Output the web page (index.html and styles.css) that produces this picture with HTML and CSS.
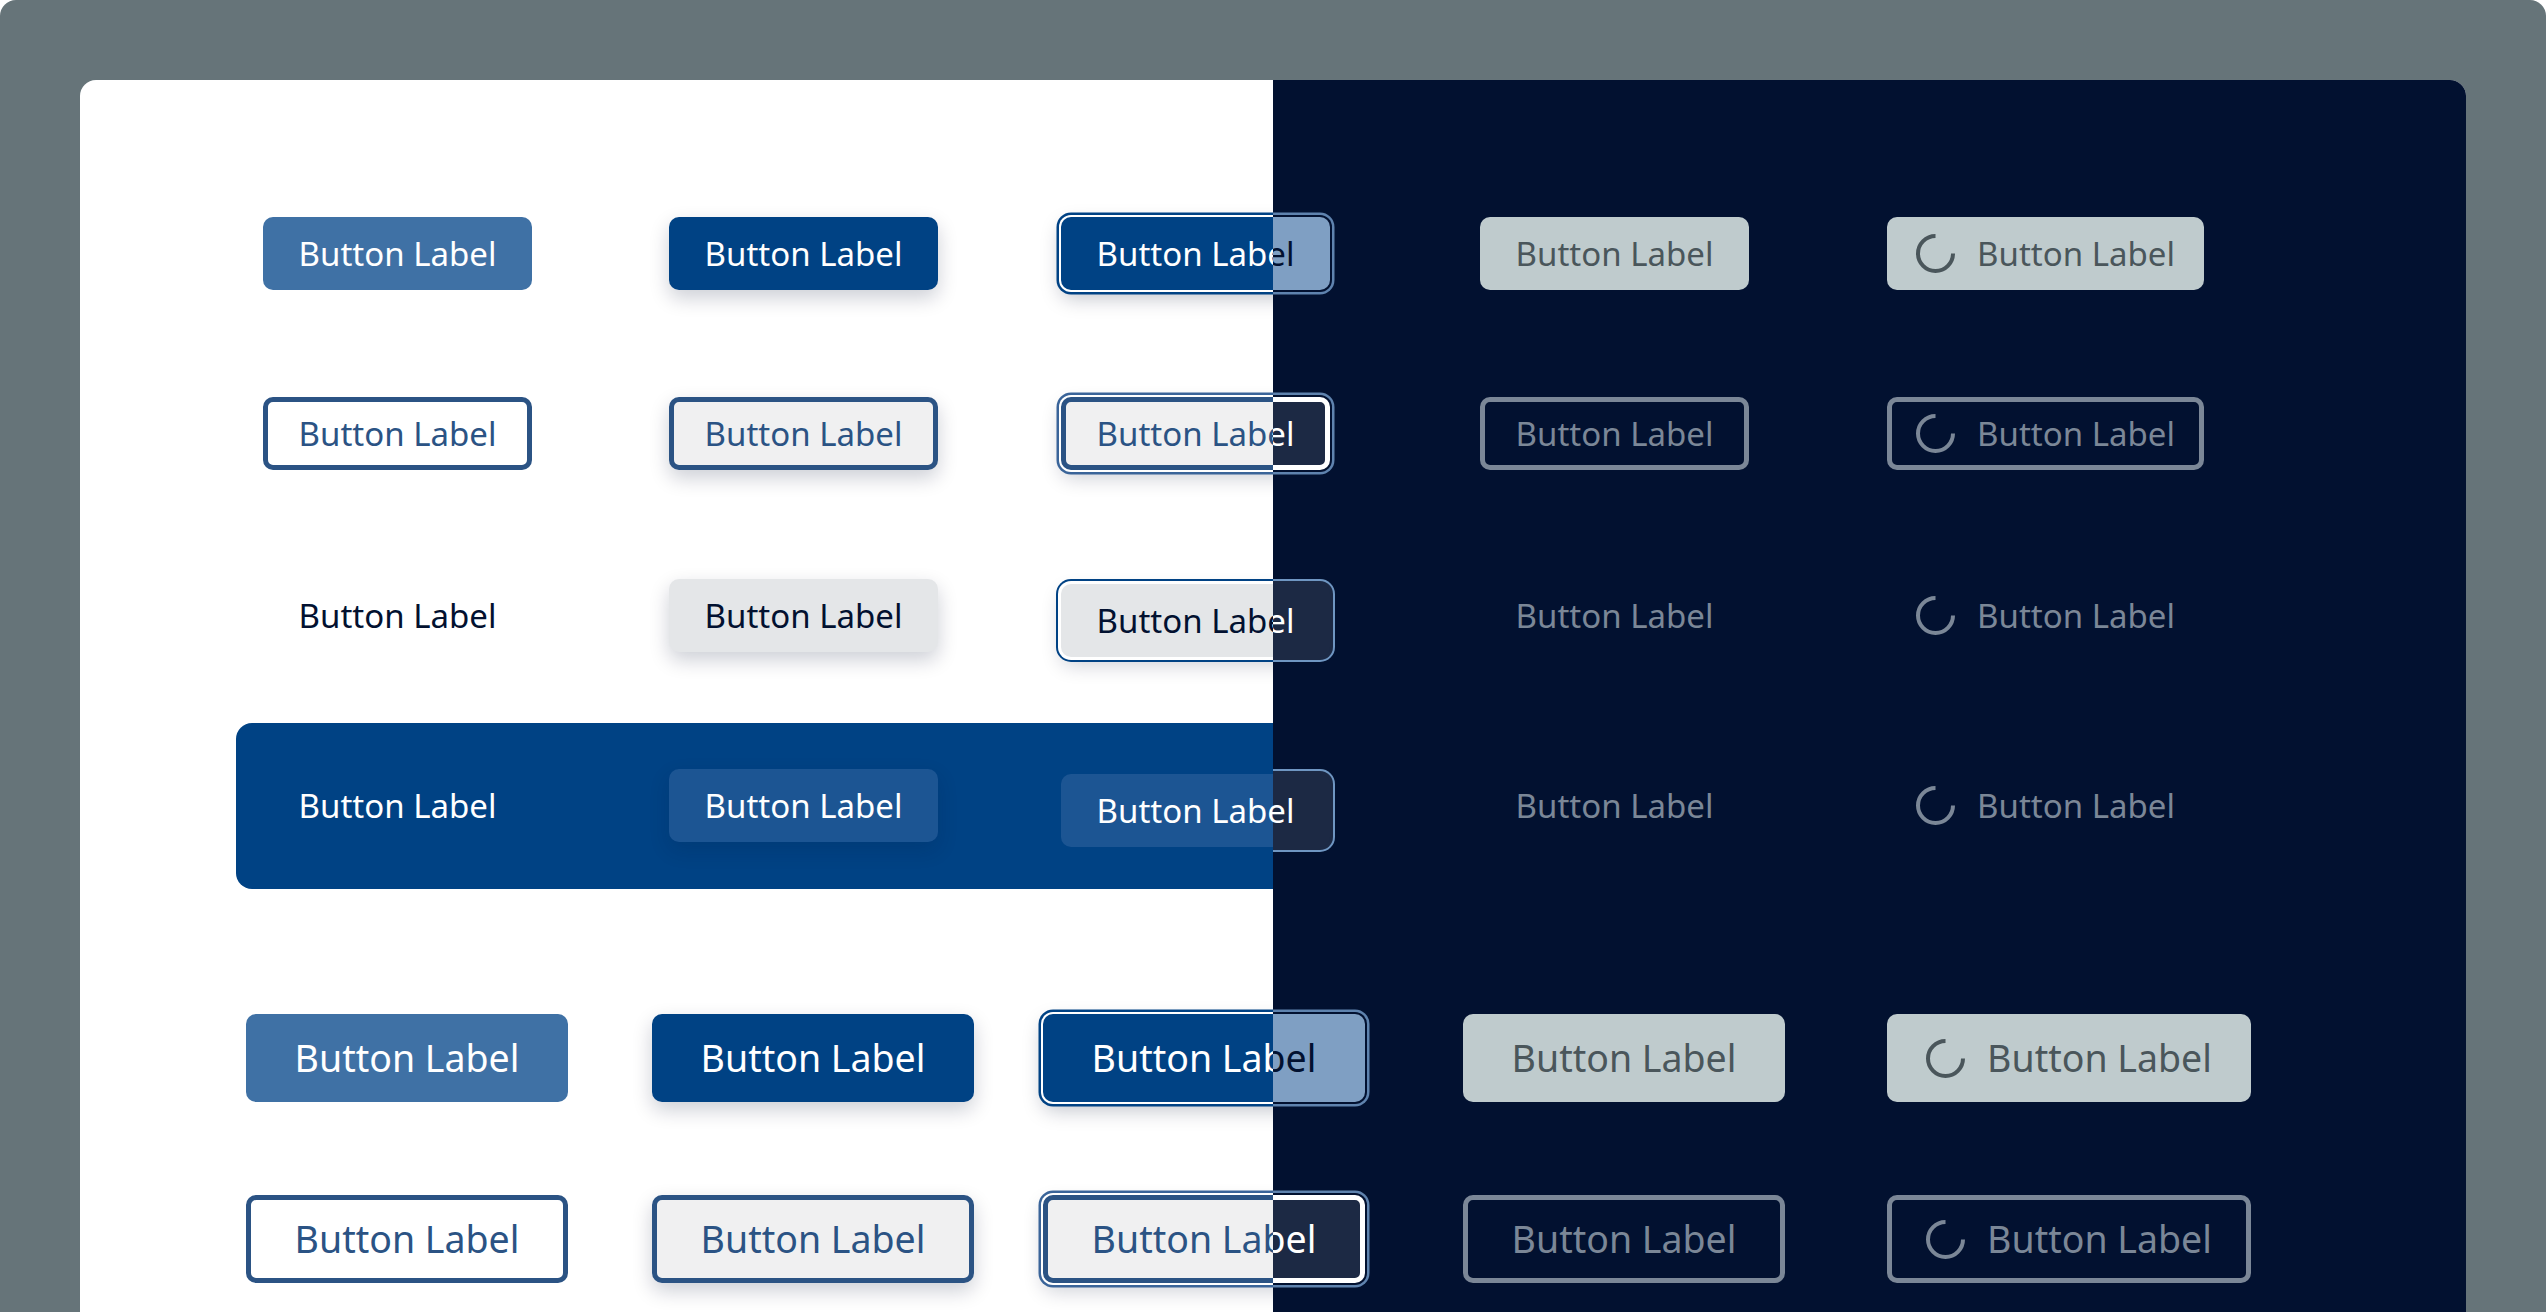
FILE: index.html
```html
<!DOCTYPE html>
<html lang="en">
<head>
    <meta charset="UTF-8">
    <title>Button states</title>
    <link rel="stylesheet" href="styles.css">
</head>
<body>
    <div class="frame">
        <div class="card">

            <!-- light half: first three columns -->
            <div class="sheet">
                <div class="grid small">
                    <button class="btn primary">Button Label</button>
                    <button class="btn primary raised">Button Label</button>
                    <button class="btn primary focus">Button Label</button>

                    <button class="btn secondary">Button Label</button>
                    <button class="btn secondary hover raised">Button Label</button>
                    <button class="btn secondary hover focus">Button Label</button>

                    <button class="btn ghost">Button Label</button>
                    <button class="btn ghost hover raised">Button Label</button>
                    <button class="btn ghost hover focus-thin low">Button Label</button>

                    <div class="panel">
                        <button class="btn on-blue">Button Label</button>
                        <button class="btn on-blue hover raised-blue">Button Label</button>
                        <button class="btn on-blue hover low">Button Label</button>
                    </div>
                </div>

                <div class="grid large">
                    <button class="btn primary">Button Label</button>
                    <button class="btn primary raised">Button Label</button>
                    <button class="btn primary focus">Button Label</button>

                    <button class="btn secondary">Button Label</button>
                    <button class="btn secondary hover raised">Button Label</button>
                    <button class="btn secondary hover focus">Button Label</button>
                </div>
            </div>

            <!-- dark half lies over the light one, from column 3 onwards -->
            <div class="sheet dark">
                <div class="grid small">
                    <button class="btn primary focus">Button Label</button>
                    <button class="btn disabled">Button Label</button>
                    <button class="btn disabled"><svg class="spin" viewBox="0 0 39 39"><path d="M37 19.5A17.5 17.5 0 1 1 19.5 2"/></svg>Button Label</button>

                    <button class="btn secondary focus">Button Label</button>
                    <button class="btn disabled-line">Button Label</button>
                    <button class="btn disabled-line"><svg class="spin" viewBox="0 0 39 39"><path d="M37 19.5A17.5 17.5 0 1 1 19.5 2"/></svg>Button Label</button>

                    <button class="btn ghost focus-thin low">Button Label</button>
                    <button class="btn disabled-text">Button Label</button>
                    <button class="btn disabled-text"><svg class="spin" viewBox="0 0 39 39"><path d="M37 19.5A17.5 17.5 0 1 1 19.5 2"/></svg>Button Label</button>

                    <button class="btn ghost focus-thin low">Button Label</button>
                    <button class="btn disabled-text">Button Label</button>
                    <button class="btn disabled-text"><svg class="spin" viewBox="0 0 39 39"><path d="M37 19.5A17.5 17.5 0 1 1 19.5 2"/></svg>Button Label</button>
                </div>

                <div class="grid large">
                    <button class="btn primary focus">Button Label</button>
                    <button class="btn disabled">Button Label</button>
                    <button class="btn disabled"><svg class="spin" viewBox="0 0 39 39"><path d="M37 19.5A17.5 17.5 0 1 1 19.5 2"/></svg>Button Label</button>

                    <button class="btn secondary focus">Button Label</button>
                    <button class="btn disabled-line">Button Label</button>
                    <button class="btn disabled-line"><svg class="spin" viewBox="0 0 39 39"><path d="M37 19.5A17.5 17.5 0 1 1 19.5 2"/></svg>Button Label</button>
                </div>
            </div>

        </div>
    </div>
</body>
</html>
```

FILE: styles.css
```css
html, body {
    margin: 0;
    height: 100%;
    background-color: #fff;
    overflow: hidden;
}

body {
    font-family: "Noto Sans", Arial, sans-serif;
}

.frame {
    height: 100%;
    box-sizing: border-box;
    padding: 80px 80px 0;
    background-color: #667479;
    border-radius: 16px 16px 0 0;
}

.card {
    position: relative;
    height: 100%;
    background-color: #fff;
    border-radius: 16px 16px 0 0;
    overflow: hidden;
}

/* Sheets */
.sheet {
    padding: 137px 0 0 183px;
}

.sheet.dark {
    position: absolute;
    top: 0;
    bottom: 0;
    left: 1193px;
    right: 0;
    padding-left: 0;
    background-color: #021130;
    overflow: hidden;
}

/* Grids */
.grid {
    display: grid;
    justify-items: start;
    align-items: start;
}

.grid.small {
    grid-template-columns: 406px 392px 419px;
    grid-template-rows: 180px 182px 190px 73px;
}

.grid.large {
    grid-template-columns: 406px 391px 420px;
    grid-template-rows: 181px 88px;
    margin: 172px 0 0 -17px;
}

.dark .grid.small {
    grid-template-columns: 419px 407px auto;
    margin-left: -212px;
}

.dark .grid.large {
    grid-template-columns: 420px 424px auto;
    margin: 172px 0 0 -230px;
}

/* Blue panel behind row 4 */
.panel {
    grid-column: 1 / -1;
    justify-self: stretch;
    display: grid;
    grid-template-columns: 406px 392px 419px;
    align-items: start;
    margin: -46px 0 0 -27px;
    padding: 46px 0 42px 27px;
    background-color: #004284;
    border-radius: 16px;
}

/* Buttons */
.btn {
    display: flex;
    align-items: center;
    justify-content: center;
    box-sizing: border-box;
    border: none;
    border-radius: 10px;
    background: none;
    font-family: inherit;
    font-size: 33px;
    line-height: 1;
    white-space: nowrap;
}

.small .btn {
    width: 269px;
    height: 73px;
}

.large .btn {
    width: 322px;
    height: 88px;
    font-size: 37.5px;
}

.primary {
    background-color: #3f71a5;
    color: #fff;
}

.primary.raised,
.primary.focus {
    background-color: #004284;
}

.secondary {
    background-color: #fff;
    border: 5px solid #2b5384;
    color: #2b5384;
}

.secondary.hover {
    background-color: #f0f0f1;
}

.ghost {
    color: #021130;
}

.ghost.hover {
    background-color: #e4e6e8;
}

.on-blue {
    color: #fff;
}

.on-blue.hover {
    background-color: #1c5593;
}

.raised {
    box-shadow: 0 8px 20px rgba(2, 17, 48, 0.2);
}

.raised-blue {
    box-shadow: 0 8px 20px rgba(2, 17, 48, 0.15);
}

.focus {
    box-shadow: 0 0 0 2px #fff, 0 0 0 4.5px #004284, 0 8px 20px rgba(2, 17, 48, 0.25);
}

.secondary.focus {
    box-shadow: 0 0 0 2px #fff, 0 0 0 4.5px #3a6499, 0 8px 20px rgba(2, 17, 48, 0.2);
}

.focus-thin {
    box-shadow: 0 0 0 3px #fff, 0 0 0 5px #004284, 0 8px 20px rgba(2, 17, 48, 0.2);
}

.low {
    margin-top: 5px;
}

/* Dark variants */
.dark .primary.focus {
    background-color: #7f9fc3;
    color: #021130;
    box-shadow: 0 0 0 2px #021130, 0 0 0 4.5px #5f83ae;
}

.dark .secondary.focus {
    background-color: #1c2944;
    border-color: #fff;
    color: #fff;
    box-shadow: 0 0 0 2px #021130, 0 0 0 4.5px #5f83ae;
}

.dark .ghost {
    background-color: #1c2944;
    color: #fff;
    box-shadow: 0 0 0 3px #1c2944, 0 0 0 5px #6f96c2;
}

.disabled {
    background-color: #bfcbcd;
    color: #4a565b;
}

.disabled-line {
    border: 5px solid #7b8797;
    color: #7b8797;
}

.disabled-text {
    color: #7b8797;
}

/* Spinner */
.spin {
    flex: none;
    width: 39px;
    height: 39px;
    margin-right: 22px;
    fill: none;
    stroke: currentColor;
    stroke-width: 4;
}

.small .btn:has(.spin) {
    width: 317px;
}

.large .btn:has(.spin) {
    width: 364px;
}
```
